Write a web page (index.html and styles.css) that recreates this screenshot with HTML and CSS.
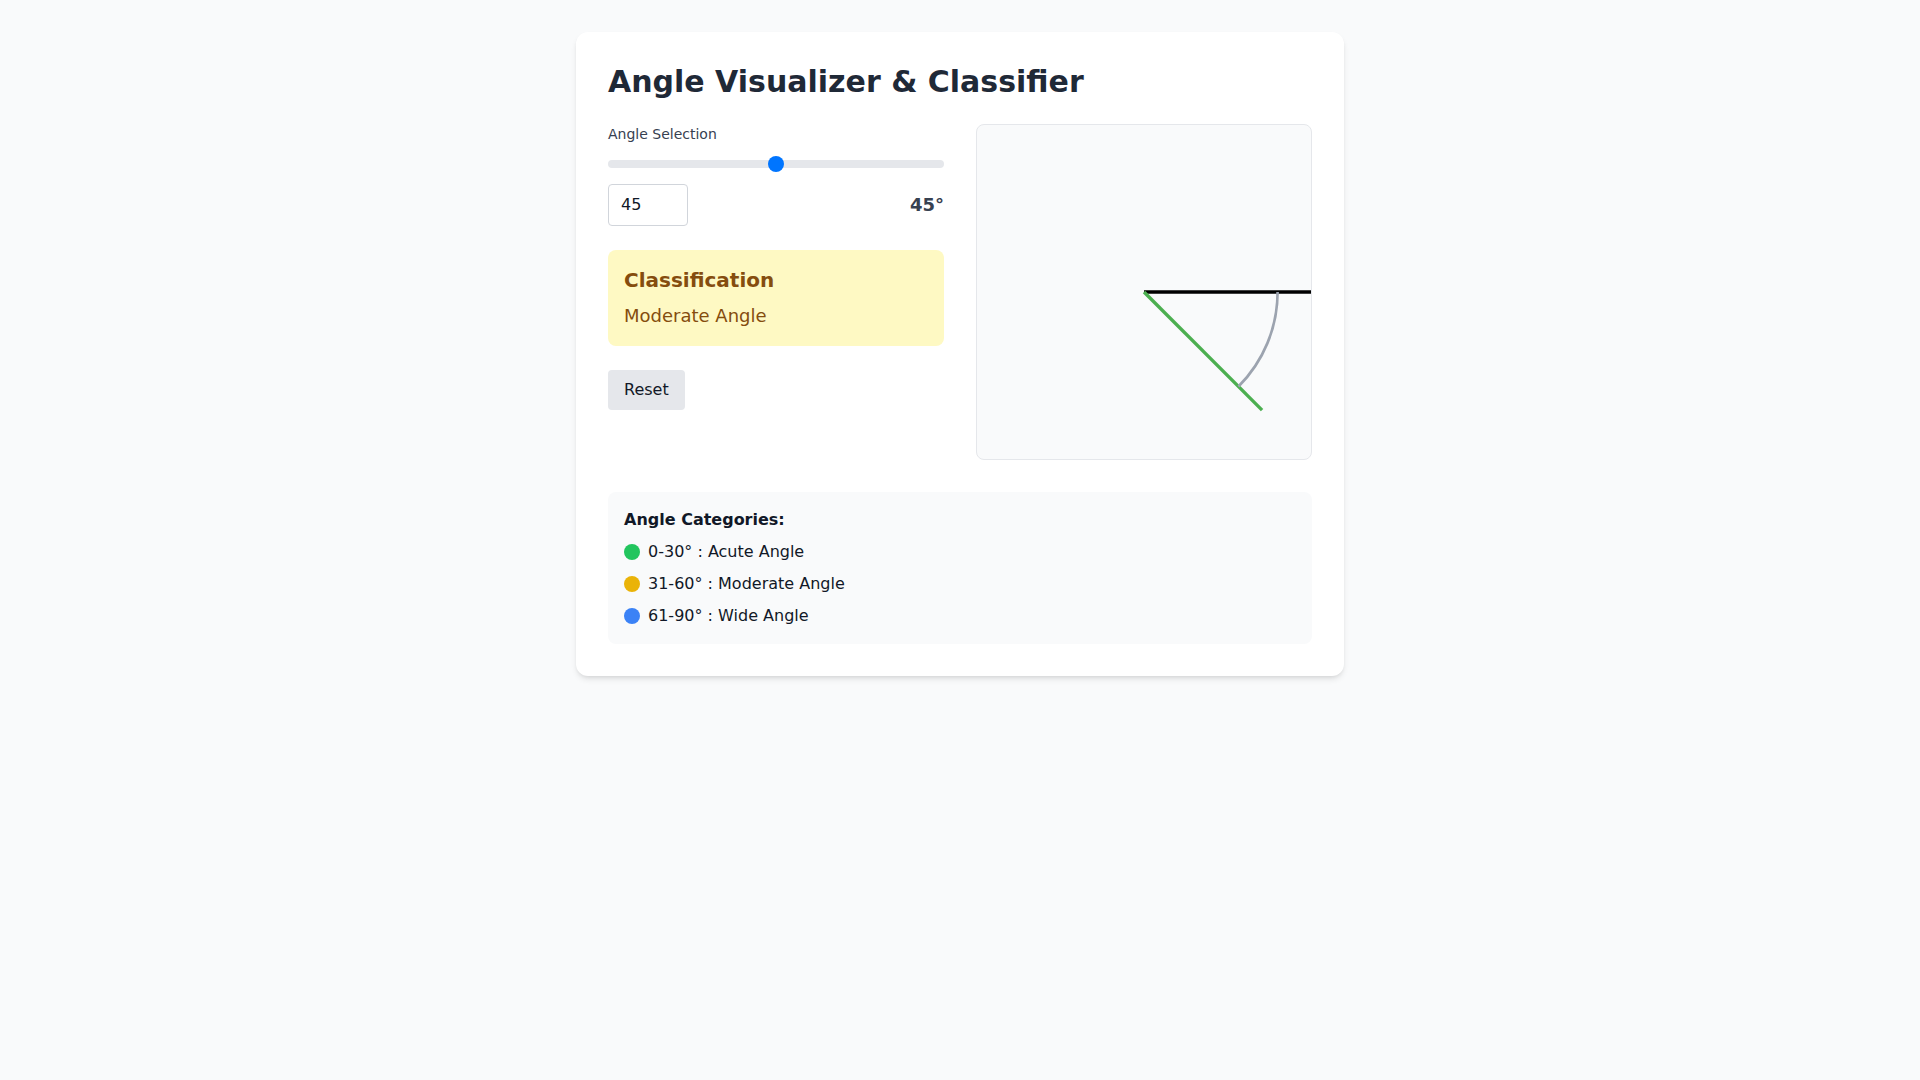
FILE: index.html
```html
<!DOCTYPE html>
<html lang="en">
<head>
    <meta charset="UTF-8">
    <meta name="viewport" content="width=device-width, initial-scale=1.0">
    <title>Angle Visualizer &amp; Classifier</title>
    <link rel="stylesheet" href="styles.css">
</head>
<body>
    <div class="card">
        <h1>Angle Visualizer &amp; Classifier</h1>
        <div class="columns">
            <div class="controls">
                <label for="angle-range">Angle Selection</label>
                <div class="range-wrap">
                    <input type="range" id="angle-range" min="0" max="90" value="45">
                </div>
                <div class="value-row">
                    <input type="number" id="angle-input" min="0" max="90" value="45">
                    <span class="angle-readout">45°</span>
                </div>
                <div class="classification">
                    <h3>Classification</h3>
                    <p>Moderate Angle</p>
                </div>
                <button type="button" id="reset">Reset</button>
            </div>
            <div class="canvas">
                <svg viewBox="-100 -100 200 200" width="100%" height="100%">
                    <line x1="0" y1="0" x2="100" y2="0" stroke="#000" stroke-width="2"></line>
                    <line x1="0" y1="0" x2="70.71" y2="70.71" stroke="#4caf50" stroke-width="2"></line>
                    <path d="M 80 0 A 80 80 0 0 1 56.57 56.57" fill="none" stroke="#9ca3af" stroke-width="1.6"></path>
                </svg>
            </div>
        </div>
        <div class="legend">
            <h4>Angle Categories:</h4>
            <ul>
                <li><span class="dot dot-green"></span>0-30° : Acute Angle</li>
                <li><span class="dot dot-yellow"></span>31-60° : Moderate Angle</li>
                <li><span class="dot dot-blue"></span>61-90° : Wide Angle</li>
            </ul>
        </div>
    </div>
</body>
</html>
```

FILE: styles.css
```css
body {
    font-family: "DejaVu Sans", Verdana, sans-serif;
    margin: 0;
    padding: 32px;
    background-color: #f9fafb;
    color: #111827;
}
.card {
    max-width: 768px;
    margin: 0 auto;
    padding: 32px;
    box-sizing: border-box;
    background-color: #fff;
    border-radius: 12px;
    box-shadow: 0 4px 6px -1px rgba(0,0,0,0.1), 0 2px 4px -2px rgba(0,0,0,0.1);
}
h1 { margin: 0 0 24px; font-size: 30px; line-height: 36px; font-weight: 700; color: #1f2937; }
.columns { display: grid; grid-template-columns: 1fr 1fr; gap: 32px; }
.controls label { display: block; font-size: 14px; line-height: 20px; color: #374151; margin-bottom: 8px; }
.range-wrap { padding: 8px 0; }
input[type="range"] {
    -webkit-appearance: none;
    appearance: none;
    display: block;
    width: 100%;
    height: 8px;
    margin: 0;
    background: #e5e7eb;
    border-radius: 8px;
    outline: none;
}
input[type="range"]::-webkit-slider-thumb {
    -webkit-appearance: none;
    width: 16px;
    height: 16px;
    border-radius: 50%;
    background: #0075ff;
    border: none;
}
.value-row { display: flex; justify-content: space-between; align-items: center; margin-top: 8px; margin-bottom: 24px; }
input[type="number"] {
    width: 80px;
    box-sizing: border-box;
    padding: 8px 12px;
    font-family: inherit;
    font-size: 16px;
    line-height: 24px;
    color: #111827;
    border: 1px solid #d1d5db;
    border-radius: 4px;
    -moz-appearance: textfield;
}
input[type="number"]::-webkit-inner-spin-button,
input[type="number"]::-webkit-outer-spin-button { -webkit-appearance: none; margin: 0; }
.angle-readout { font-size: 18px; line-height: 28px; font-weight: 700; color: #374151; }
.classification { background-color: #fef9c3; border-radius: 8px; padding: 16px; margin-bottom: 24px; color: #854d0e; }
.classification h3 { margin: 0 0 8px; font-size: 20px; line-height: 28px; font-weight: 700; }
.classification p { margin: 0; font-size: 18px; line-height: 28px; }
button {
    font-family: inherit;
    font-size: 16px;
    line-height: 24px;
    padding: 8px 16px;
    background-color: #e5e7eb;
    color: #111827;
    border: none;
    border-radius: 4px;
    cursor: pointer;
}
.canvas {
    aspect-ratio: 1 / 1;
    box-sizing: border-box;
    background-color: #f9fafb;
    border: 1px solid #e5e7eb;
    border-radius: 8px;
    overflow: hidden;
}
.canvas svg { display: block; }
.legend { margin-top: 32px; padding: 16px; background-color: #f9fafb; border-radius: 8px; }
.legend h4 { margin: 0 0 8px; font-size: 16px; line-height: 24px; font-weight: 700; }
.legend ul { list-style: none; margin: 0; padding: 0; display: flex; flex-direction: column; gap: 8px; }
.legend li { display: flex; align-items: center; gap: 8px; font-size: 16px; line-height: 24px; }
.dot { width: 16px; height: 16px; border-radius: 50%; }
.dot-green { background-color: #22c55e; }
.dot-yellow { background-color: #eab308; }
.dot-blue { background-color: #3b82f6; }
```
